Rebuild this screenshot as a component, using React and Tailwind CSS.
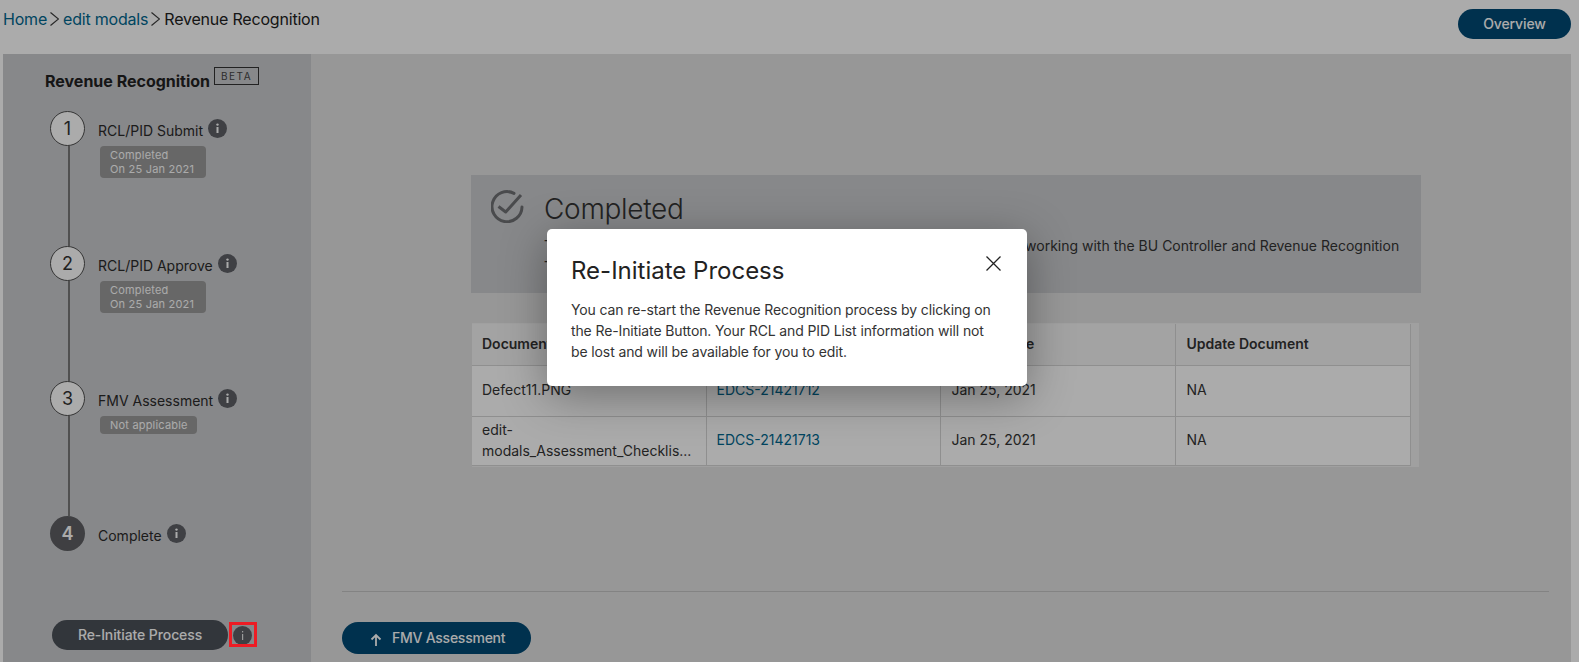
import React from 'react';

const steps = [
  { n: 1, label: 'RCL/PID Submit', badge: ['Completed', 'On 25 Jan 2021'] },
  { n: 2, label: 'RCL/PID Approve', badge: ['Completed', 'On 25 Jan 2021'] },
  { n: 3, label: 'FMV Assessment', badge: ['Not applicable'], badgeWidth: 'w-[97px]' },
  { n: 4, label: 'Complete', active: true },
];

const docs = [
  { name: 'Defect11.PNG', edcs: 'EDCS-21421712', date: 'Jan 25, 2021' },
  { name: 'edit-\nmodals_Assessment_Checklis...', edcs: 'EDCS-21421713', date: 'Jan 25, 2021' },
];

function InfoIcon({ className, thin }) {
  return (
    <svg viewBox="0 0 19 19" className={className}>
      <circle cx="9.5" cy="9.5" r="9.5" fill="#5e6066" />
      {thin ? (
        <>
          <rect x="9" y="5" width="1.2" height="1.4" fill="#e8e8e8" />
          <rect x="9" y="8" width="1.2" height="6" fill="#e8e8e8" />
        </>
      ) : (
        <>
          <circle cx="9.5" cy="5.6" r="1.2" fill="#fff" />
          <rect x="8.5" y="8" width="2" height="6" fill="#fff" />
        </>
      )}
    </svg>
  );
}

function Chevron() {
  return (
    <svg viewBox="0 0 9 14" className="w-[9px] h-[14px] ml-[3px] mr-[4px]" fill="none" stroke="#3c3c3c" strokeWidth="1.2">
      <path d="M0.5 0.5L8.5 7L0.5 13.5" />
    </svg>
  );
}

function Step({ step }) {
  return (
    <div className={step.active ? 'flex shrink-0' : 'flex h-[135px] shrink-0'}>
      <div className="flex flex-col items-center w-[35px] shrink-0">
        <div
          className={
            step.active
              ? 'w-[35px] h-[35px] rounded-full bg-[#5e5f63] text-white font-semibold flex items-center justify-center text-lg shrink-0'
              : 'w-[35px] h-[35px] rounded-full bg-white border border-[#4e4e4e] text-[#333] flex items-center justify-center text-lg shrink-0'
          }
        >
          {step.n}
        </div>
        {!step.active && <div className="w-[2px] grow bg-[#787878] translate-x-[1px]" />}
      </div>
      <div className="pl-[13px]">
        <div className="flex items-start h-[35px]">
          <span className="text-sm leading-5 mt-[10px] text-[#2a2a2a]">{step.label}</span>
          <InfoIcon className="w-[19px] h-[19px] ml-[5px] mt-[8px]" />
        </div>
        {step.badge && (
          <div className={`ml-[2px] rounded bg-[#9a9a9a] pl-[10px] py-[2px] text-[11px] leading-[14px] tracking-[0.2px] text-white ${step.badgeWidth || 'w-[106px]'}`}>
            {step.badge.map((t) => (
              <div key={t}>{t}</div>
            ))}
          </div>
        )}
      </div>
    </div>
  );
}

export default function App() {
  return (
    <div className="relative h-screen overflow-hidden bg-white font-['Inter',sans-serif] text-[#222]">
      <div className="h-[54px] flex justify-between pl-[3px] pr-[8px]">
        <div className="flex items-center h-[38px] text-base tracking-[-0.2px]">
          <span className="text-[#00688f]">Home</span>
          <Chevron />
          <span className="text-[#00688f]">edit modals</span>
          <Chevron />
          <span>Revenue Recognition</span>
        </div>
        <button className="mt-[9px] w-[113px] h-[30px] rounded-full bg-[#004a75] text-white text-sm font-medium tracking-[-0.1px]">Overview</button>
      </div>

      <div className="flex h-[608px] ml-[3px] mr-[8px] bg-[#e2e2e2]">
        <aside className="w-[308px] shrink-0 bg-[#cacbce] flex flex-col pl-[47px] pb-[12px]">
          <div className="flex h-[57px] shrink-0 -ml-[5px] pt-[15px]">
            <span className="font-bold text-base leading-6 text-[#222]">Revenue Recognition</span>
            <span className="ml-[4px] -mt-[2px] h-[18px] w-[45px] border border-[#333] text-[10px] leading-[16px] tracking-[1.5px] text-center text-[#444]">BETA</span>
          </div>
          {steps.map((s) => (
            <Step key={s.n} step={s} />
          ))}
          <div className="mt-auto flex items-center ml-[2px]">
            <button className="w-[176px] h-[30px] rounded-full bg-[#4b5159] text-white text-sm font-medium tracking-[-0.1px]">Re-Initiate Process</button>
            <InfoIcon thin className="w-[19px] h-[19px] ml-[5px]" />
          </div>
        </aside>

        <main className="grow min-w-0 flex flex-col pl-[31px] pr-[22px]">
          <div className="h-[121px] shrink-0" />
          <div className="ml-[129px] w-[950px] h-[118px] shrink-0 bg-[#cacbce] flex pl-[20px] pt-[16px]">
            <svg viewBox="0 0 33 33" className="w-[33px] h-[33px] shrink-0 -mt-[1px]" fill="none" stroke="#6f7074" strokeWidth="3">
              <path d="M23 3.4A15 15 0 1 0 31 17" strokeLinecap="round" />
              <path d="M7.5 16.5L14.7 22L30 5" strokeLinejoin="round" />
            </svg>
            <div className="pl-[20px] min-w-0">
              <div className="text-[28px] leading-9 font-light tracking-[-0.3px] text-[#333]">Completed</div>
              <p className="text-sm leading-[21px] mt-[8px] text-[#333] whitespace-nowrap">
                The Revenue Recognition process for the deal was completed. Continue working with the BU Controller and Revenue Recognition
                <br />
                Team.
              </p>
            </div>
          </div>

          <div className="mt-[30px] ml-[130px] w-[947px] pr-[8px] py-[1px] bg-[#efefef]">
            <table className="w-full table-fixed border-collapse bg-white text-sm text-[#333]">
              <thead>
                <tr className="h-[41px] bg-[#f3f3f3]">
                  <th className="w-[234px] text-left pl-[10px] pr-[11px] font-semibold border-r border-b border-[#d5d5d5]">Document Name</th>
                  <th className="w-[234px] text-left pl-[10px] pr-[11px] font-semibold border-r border-b border-[#d5d5d5]">EDCS ID</th>
                  <th className="w-[235px] text-left px-[11px] font-semibold border-r border-b border-[#d5d5d5]">Upload Date</th>
                  <th className="text-left px-[11px] font-semibold border-r border-b border-[#d5d5d5]">Update Document</th>
                </tr>
              </thead>
              <tbody>
                {docs.map((d, i) => (
                  <tr key={d.edcs} className={i === 0 ? 'h-[51px]' : 'h-[49px]'}>
                    <td className="pl-[10px] pr-[11px] pb-[2px] leading-[21px] whitespace-pre-line border-r border-b border-[#d5d5d5]">{d.name}</td>
                    <td className="pl-[10px] pr-[11px] pb-[2px] text-[#00688f] border-r border-b border-[#d5d5d5]">{d.edcs}</td>
                    <td className="px-[11px] pb-[2px] border-r border-b border-[#d5d5d5]">{d.date}</td>
                    <td className="px-[11px] pb-[2px] border-r border-b border-[#d5d5d5]">NA</td>
                  </tr>
                ))}
              </tbody>
            </table>
          </div>

          <div className="mt-auto border-t border-[#c4c4c4] h-[71px] pt-[30px]">
            <button className="w-[189px] h-[32px] rounded-full bg-[#004a75] text-white text-sm font-medium tracking-[-0.25px] flex items-center pl-[28px] gap-[10px]">
              <svg viewBox="0 0 12 13" className="w-[12px] h-[13px] mt-[2px]" fill="none" stroke="#fff" strokeWidth="1.8">
                <path d="M6 13V2M1.5 6.5L6 2l4.5 4.5" />
              </svg>
              FMV Assessment
            </button>
          </div>
        </main>
      </div>

      <div className="absolute inset-0 bg-black/33" />

      <div className="absolute left-[547px] top-[229px] w-[480px] h-[157px] rounded-[5px] bg-white shadow-[0_10px_45px_rgba(0,0,0,0.35)] px-[24px] pt-[25px]">
        <h2 className="text-2xl leading-[34px] text-[#222]">Re-Initiate Process</h2>
        <p className="mt-[11px] text-sm leading-[21px] tracking-[-0.12px] text-[#333]">
          You can re-start the Revenue Recognition process by clicking on the Re-Initiate Button. Your RCL and PID List information will not be lost and will be available for you to edit.
        </p>
        <svg viewBox="0 0 15 15" className="absolute right-[26px] top-[27px] w-[15px] h-[15px]" fill="none" stroke="#222" strokeWidth="1.3">
          <path d="M0.5 0.5l14 14M14.5 0.5l-14 14" />
        </svg>
      </div>

      <div className="absolute left-[229px] top-[622px] w-[28px] h-[25px] border-[3px] border-[#ed1c24]" />
    </div>
  );
}
